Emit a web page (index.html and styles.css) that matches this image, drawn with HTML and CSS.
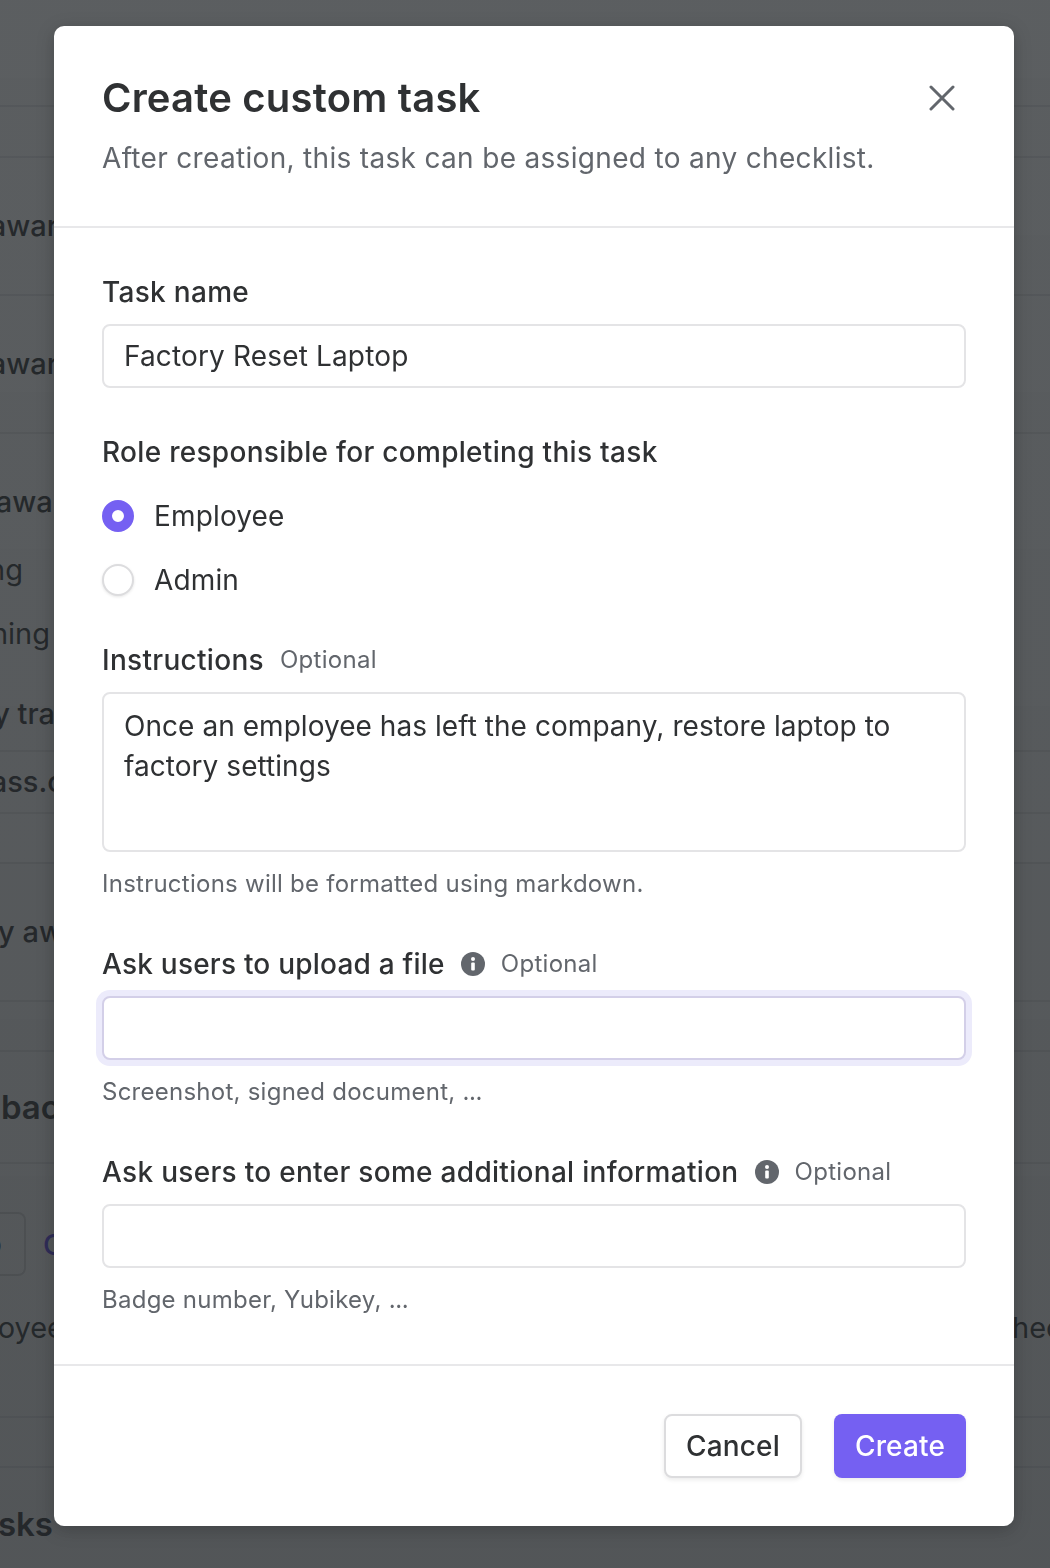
FILE: index.html
```html
<!DOCTYPE html>
<html lang="en">
<head>
<meta charset="utf-8">
<title>Create custom task</title>
<link rel="stylesheet" href="styles.css">
</head>
<body>
<div class="page">
  <div class="bg-row h107"></div>
  <div class="bg-row h51"></div>
  <div class="bg-row h138"><span class="bg-text e58">awar</span></div>
  <div class="bg-row h138"><span class="bg-text e58">awar</span></div>
  <div class="bg-stack">
    <span class="bg-text e64">awar</span>
    <span class="bg-text e23 gap28">ng</span>
    <span class="bg-text e50 gap24">ning</span>
    <span class="bg-text e55 gap40">y tra</span>
  </div>
  <div class="bg-row h62"><span class="bg-text e64">ass.c</span></div>
  <div class="bg-row h50"></div>
  <div class="bg-row h138"><span class="bg-text e63">y aw</span></div>
  <div class="bg-row h50"></div>
  <div class="bg-row h112"><span class="bg-text bg-heading e60">bac</span></div>
  <div class="bg-controls">
    <div class="bg-left">
      <span class="bg-btn">p</span>
      <span class="bg-link">C</span>
    </div>
    <div class="bg-sub">
      <span class="bg-text bg-muted e64">oyee</span>
      <span class="bg-end">hec</span>
    </div>
  </div>
  <div class="bg-row h50"></div>
  <div class="bg-tail"><span class="bg-text bg-heading e53">sks</span></div>
</div>
<div class="overlay"></div>
<div class="modal">
  <header class="modal-head">
    <div class="title-row">
      <h2 class="title">Create custom task</h2>
      <svg class="close" viewBox="0 0 26 26" width="26" height="26" aria-hidden="true"><path d="M2 2 L24 24 M24 2 L2 24"/></svg>
    </div>
    <p class="subtitle">After creation, this task can be assigned to any checklist.</p>
  </header>
  <form class="modal-body">
    <div class="field">
      <div class="label-row"><span class="label">Task name</span></div>
      <div class="input input-text">Factory Reset Laptop</div>
    </div>
    <div class="field">
      <div class="label-row"><span class="label">Role responsible for completing this task</span></div>
      <div class="radios">
        <div class="radio-row"><span class="radio radio-on"></span><span class="radio-label">Employee</span></div>
        <div class="radio-row"><span class="radio"></span><span class="radio-label">Admin</span></div>
      </div>
    </div>
    <div class="field">
      <div class="label-row"><span class="label">Instructions</span><span class="optional">Optional</span></div>
      <div class="input textarea">Once an employee has left the company, restore laptop to factory settings</div>
      <p class="hint">Instructions will be formatted using markdown.</p>
    </div>
    <div class="field">
      <div class="label-row"><span class="label label-tight">Ask users to upload a file</span>
        <svg class="info" viewBox="0 0 24 24" width="24" height="24" aria-hidden="true"><circle cx="12" cy="12" r="12"/><circle class="info-mark" cx="12" cy="7" r="2"/><rect class="info-mark" x="10.2" y="10.5" width="3.6" height="8" rx="1"/></svg>
        <span class="optional">Optional</span></div>
      <div class="input input-focus"></div>
      <p class="hint">Screenshot, signed document, <span class="dots">...</span></p>
    </div>
    <div class="field">
      <div class="label-row"><span class="label">Ask users to enter some additional information</span>
        <svg class="info" viewBox="0 0 24 24" width="24" height="24" aria-hidden="true"><circle cx="12" cy="12" r="12"/><circle class="info-mark" cx="12" cy="7" r="2"/><rect class="info-mark" x="10.2" y="10.5" width="3.6" height="8" rx="1"/></svg>
        <span class="optional">Optional</span></div>
      <div class="input"></div>
      <p class="hint">Badge number, Yubikey, <span class="dots">...</span></p>
    </div>
  </form>
  <footer class="modal-foot">
    <button class="btn btn-cancel" type="button">Cancel</button>
    <button class="btn btn-create" type="button">Create</button>
  </footer>
</div>
</body>
</html>
```
FILE: styles.css
```css
* { box-sizing: border-box; }
html, body { margin: 0; padding: 0; }
body {
  width: 1050px;
  height: 1568px;
  overflow: hidden;
  background: #fff;
  font-family: Inter, "Liberation Sans", sans-serif;
  color: #2f3133;
}
.page { height: 1568px; overflow: hidden; }
.bg-row {
  display: flex;
  align-items: center;
  border-bottom: 2px solid #e8e8ea;
}
.h107 { height: 107px; }
.h51 { height: 51px; }
.h50 { height: 50px; }
.h138 { height: 138px; }
.h62 { height: 62px; }
.h112 { height: 112px; }
.bg-text {
  display: flex;
  justify-content: flex-end;
  height: 40px;
  line-height: 40px;
  white-space: nowrap;
  font-size: 29px;
  font-weight: 500;
  color: #2f3133;
}
.e23 { width: 23px; }
.e50 { width: 50px; }
.e53 { width: 53px; }
.e55 { width: 55px; }
.e58 { width: 58px; }
.e60 { width: 60px; }
.e63 { width: 63px; }
.e64 { width: 64px; }
.gap28 { margin-top: 28px; font-weight: 400; }
.gap24 { margin-top: 24px; font-weight: 400; }
.gap40 { margin-top: 40px; }
.bg-stack {
  display: flex;
  flex-direction: column;
  height: 318px;
  padding-top: 48px;
  border-bottom: 2px solid #e8e8ea;
}
.bg-heading { font-size: 33px; font-weight: 600; }
.bg-muted { font-weight: 400; }
.bg-controls { height: 254px; padding-top: 48px; border-bottom: 2px solid #e8e8ea; }
.bg-left { display: flex; align-items: center; gap: 17px; height: 64px; }
.bg-btn {
  display: flex;
  justify-content: flex-end;
  width: 26px;
  height: 64px;
  padding-right: 22px;
  border: 2px solid #d9d9dc;
  border-left: 0;
  border-radius: 0 8px 8px 0;
  font-size: 28px;
  line-height: 60px;
  white-space: nowrap;
}
.bg-link { font-size: 29px; color: #5a44f0; font-weight: 500; }
.bg-sub { display: flex; justify-content: space-between; margin-top: 32px; }
.bg-end { width: 38px; font-size: 29px; line-height: 40px; white-space: nowrap; color: #2f3133; }
.bg-tail { padding-top: 36px; }
.overlay {
  position: fixed;
  inset: 0;
  background: linear-gradient(rgba(34, 38, 41, 0.74), rgba(34, 38, 41, 0.78));
}
.modal {
  position: fixed;
  left: 54px;
  top: 26px;
  width: 960px;
  height: 1500px;
  background: #fff;
  border-radius: 10px;
  box-shadow: 0 4px 18px rgba(0, 0, 0, 0.22);
  display: flex;
  flex-direction: column;
}
.modal-head { height: 202px; padding: 48px 48px 0; border-bottom: 2px solid #e8e8ea; }
.title-row { display: flex; justify-content: space-between; align-items: center; height: 48px; padding-right: 11px; }
.title { margin: 0; font-size: 40px; line-height: 48px; font-weight: 600; color: #2f3133; letter-spacing: 0.2px; }
.close { fill: none; stroke: #62666c; stroke-width: 3; stroke-linecap: round; }
.subtitle { margin: 16px 0 0; font-size: 28px; line-height: 40px; color: #62666c; letter-spacing: 0.32px; }
.modal-body { flex: 1; padding: 44px 48px 0; display: flex; flex-direction: column; gap: 44px; border-bottom: 2px solid #e8e8ea; }
.field { display: flex; flex-direction: column; }
.label-row { display: flex; align-items: center; height: 40px; margin-bottom: 12px; }
.label { font-size: 28px; font-weight: 500; color: #2f3133; letter-spacing: 0.3px; }
.label-tight { letter-spacing: 0.22px; }
.optional { margin-left: 16px; margin-bottom: 2px; font-size: 24px; color: #62666c; letter-spacing: 0.3px; }
.info { margin-left: 16px; fill: #62666c; }
.info-mark { fill: #fff; }
.input {
  width: 864px;
  height: 64px;
  background: #fff;
  border: 2px solid #e4e4e6;
  border-radius: 8px;
  padding: 0 20px;
  font-size: 28px;
  line-height: 40px;
  color: #2f3133;
}
.input-text { display: flex; align-items: center; letter-spacing: 0.15px; }
.textarea { height: 160px; padding-top: 12px; letter-spacing: 0.05px; }
.input-focus { border-color: #d3cfe8; box-shadow: 0 0 0 6px #ecebfb; }
.hint { margin: 16px 0 0; font-size: 24px; line-height: 32px; height: 32px; color: #62666c; letter-spacing: 0.25px; }
.dots { letter-spacing: -0.4px; }
.radios { display: flex; flex-direction: column; gap: 32px; margin-top: 16px; }
.radio-row { display: flex; align-items: center; height: 32px; gap: 20px; }
.radio { width: 32px; height: 32px; border-radius: 50%; border: 2px solid #dcdcde; box-shadow: 0 1px 3px rgba(0, 0, 0, 0.1); background: #fff; }
.radio-on { border: 10px solid #7560f2; box-shadow: none; }
.radio-label { font-size: 28px; color: #2f3133; letter-spacing: 0.15px; }
.modal-foot { height: 160px; padding: 48px 48px 0; display: flex; justify-content: flex-end; align-items: flex-start; gap: 32px; }
.btn { height: 64px; border-radius: 8px; font-family: inherit; font-size: 28px; font-weight: 500; padding: 0; letter-spacing: 0.15px; }
.btn-cancel { width: 138px; background: #fff; border: 2px solid #dcdcde; box-shadow: 0 2px 4px rgba(0, 0, 0, 0.08); color: #2f3133; }
.btn-create { width: 132px; background: #7560f2; border: 0; color: #fff; box-shadow: 0 2px 4px rgba(0, 0, 0, 0.08); }
```
